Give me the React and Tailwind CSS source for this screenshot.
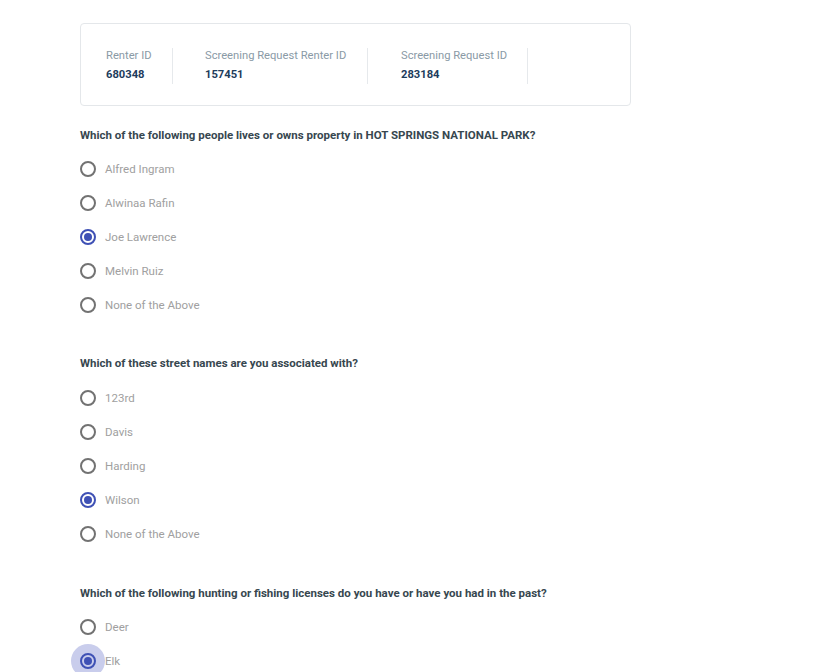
import React from 'react';

const questions = [
  {
    text: 'Which of the following people lives or owns property in HOT SPRINGS NATIONAL PARK?',
    options: ['Alfred Ingram', 'Alwinaa Rafin', 'Joe Lawrence', 'Melvin Ruiz', 'None of the Above'],
    selected: 'Joe Lawrence',
    gapTop: 'mt-[21px]',
    gapOptions: 'mt-[9px]',
  },
  {
    text: 'Which of these street names are you associated with?',
    options: ['123rd', 'Davis', 'Harding', 'Wilson', 'None of the Above'],
    selected: 'Wilson',
    gapTop: 'mt-[33px]',
    gapOptions: 'mt-[10px]',
  },
  {
    text: 'Which of the following hunting or fishing licenses do you have or have you had in the past?',
    options: ['Deer', 'Elk'],
    selected: 'Elk',
    focused: 'Elk',
    gapTop: 'mt-[34px]',
    gapOptions: 'mt-[9px]',
  },
];

function Radio({ checked, focused }) {
  return (
    <span className="relative flex h-4 w-4 shrink-0 items-center justify-center">
      {focused && (
        <span className="absolute left-1/2 top-1/2 h-[34px] w-[34px] -translate-x-1/2 -translate-y-1/2 rounded-full bg-[#c9cdec]" />
      )}
      <span
        className={
          checked
            ? 'relative flex h-4 w-4 items-center justify-center rounded-full border-2 border-[#3f51b5]'
            : 'relative flex h-4 w-4 items-center justify-center rounded-full border-2 border-[#727272]'
        }
      >
        {checked && <span className="h-[8px] w-[8px] rounded-full bg-[#3f51b5]" />}
      </span>
    </span>
  );
}

function IdItem({ label, value, className }) {
  return (
    <div className={'flex h-[36px] flex-col justify-center border-r border-[#e6e9ec] ' + className}>
      <span className="text-[11.2px] leading-[16px] text-[#8a9aa6]">{label}</span>
      <span className="mt-[3px] text-[11.2px] font-bold leading-[16px] text-[#1d3c5c]">{value}</span>
    </div>
  );
}

export default function App() {
  return (
    <div className="min-h-screen bg-white pl-[80px] pt-[23px]" style={{ fontFamily: 'Roboto, "Liberation Sans", sans-serif' }}>
      <div className="flex h-[83px] w-[551px] items-center rounded border border-[#e4e7ea] px-[25px] pt-[2px]">
        <IdItem label="Renter ID" value="680348" className="w-[67px]" />
        <IdItem label="Screening Request Renter ID" value="157451" className="ml-[32px] w-[163px]" />
        <IdItem label="Screening Request ID" value="283184" className="ml-[33px] w-[127px]" />
      </div>

      {questions.map((q, qi) => (
        <div key={qi} className={q.gapTop}>
          <p className="text-[11.5px] font-bold leading-[16px] text-[#37474f]">{q.text}</p>
          <div className={'flex flex-col ' + q.gapOptions}>
            {q.options.map((opt) => (
              <label key={opt} className="flex h-[34px] items-center gap-[9px]">
                <Radio checked={opt === q.selected} focused={opt === q.focused} />
                <span className="relative text-[11.5px] leading-[16px] text-[#a0a0a0]">{opt}</span>
              </label>
            ))}
          </div>
        </div>
      ))}
    </div>
  );
}
